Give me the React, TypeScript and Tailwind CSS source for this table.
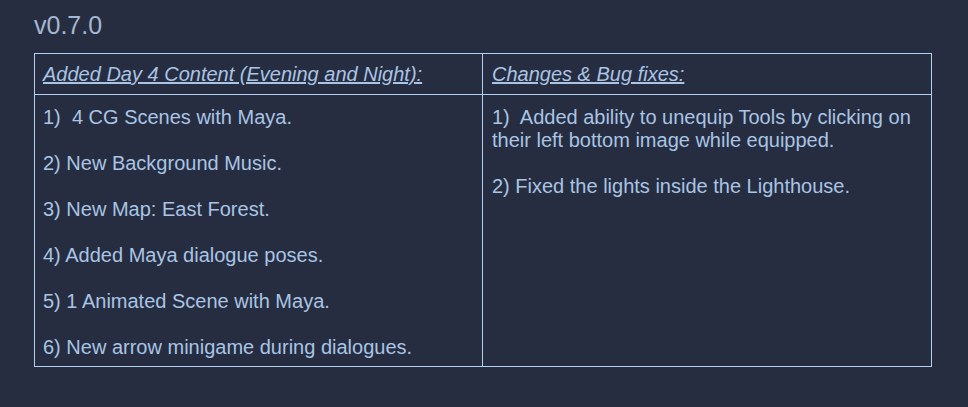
import React from "react";

const left = [
  "1)\u00a0 4 CG Scenes with Maya.",
  "2) New Background Music.",
  "3) New Map: East Forest.",
  "4) Added Maya dialogue poses.",
  "5) 1 Animated Scene with Maya.",
  "6) New arrow minigame during dialogues.",
];

const right = [
  "1)\u00a0 Added ability to unequip Tools by clicking on their left bottom image while equipped.",
  "2) Fixed the lights inside the Lighthouse.",
];

export default function App() {
  return (
    <div
      className="w-[968px] h-[407px] bg-[#262d40] text-[#a9c4e4] pl-[34px] pt-[10px]"
      style={{ fontFamily: '"Liberation Sans", Arial, sans-serif' }}
    >
      <div className="text-[25px] leading-[30px] text-[#a3b8d2]">v0.7.0</div>
      <table className="mt-[13px] w-[898px] border-collapse border border-[#b4d0f0] text-[20px] leading-[23px]">
        <thead>
          <tr>
            <th className="w-[448px] border border-[#b4d0f0] px-[8px] pt-[9px] pb-[8px] text-left font-normal italic underline align-top">
              Added Day 4 Content (Evening and Night):
            </th>
            <th className="border border-[#b4d0f0] px-[9px] pt-[9px] pb-[8px] text-left font-normal italic underline align-top">
              Changes &amp; Bug fixes:
            </th>
          </tr>
        </thead>
        <tbody>
          <tr>
            <td className="border border-[#b4d0f0] px-[8px] pt-[11px] pb-[7px] align-top">
              <div className="flex flex-col gap-[23px]">
                {left.map((t) => (
                  <div key={t}>{t}</div>
                ))}
              </div>
            </td>
            <td className="border border-[#b4d0f0] px-[9px] pt-[11px] pb-[7px] align-top">
              <div className="flex flex-col gap-[23px]">
                {right.map((t) => (
                  <div key={t}>{t}</div>
                ))}
              </div>
            </td>
          </tr>
        </tbody>
      </table>
    </div>
  );
}
